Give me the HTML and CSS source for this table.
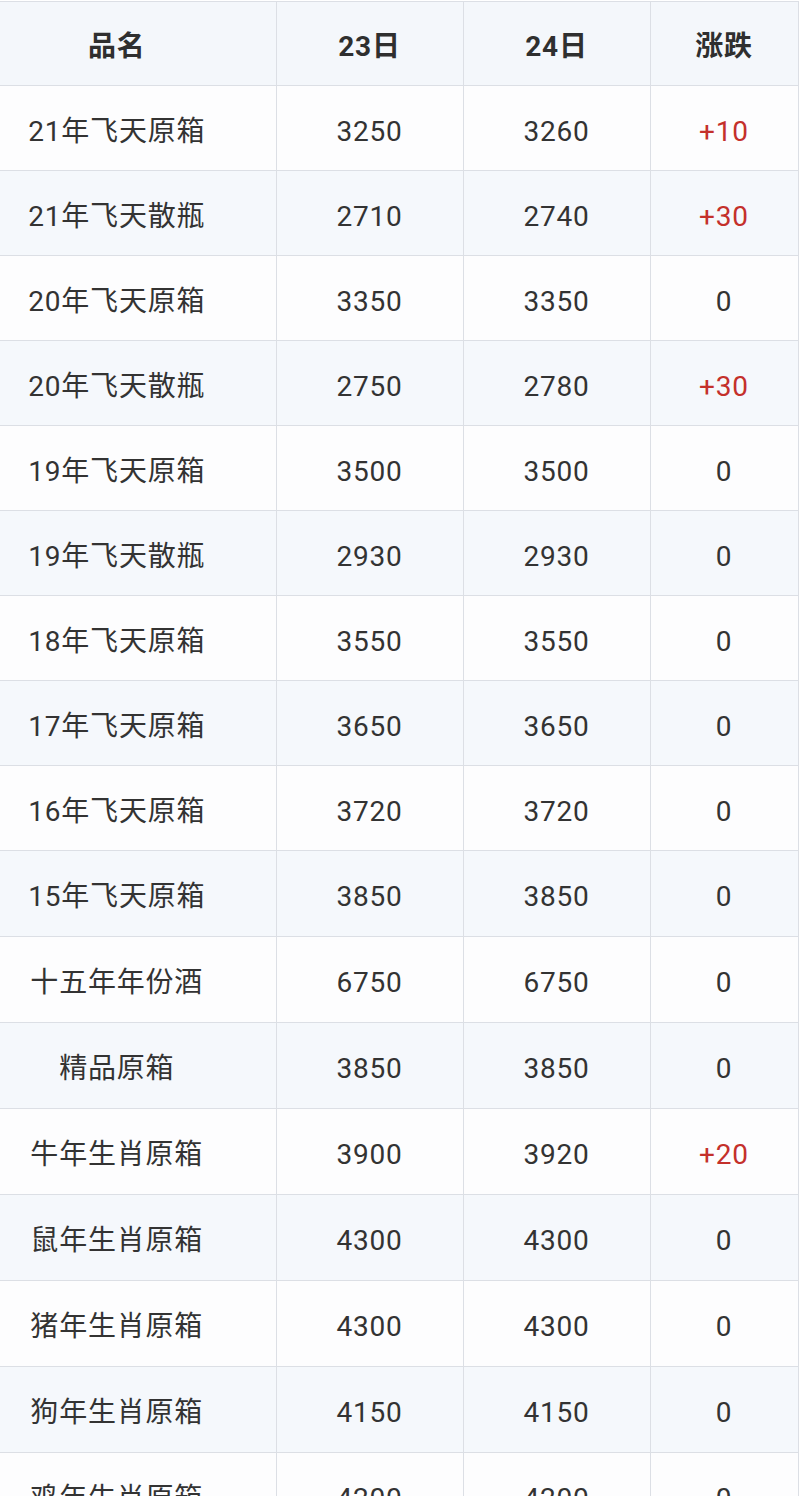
FILE: index.html
```html
<!DOCTYPE html>
<html lang="zh-CN">
<head>
<meta charset="utf-8">
<title>价格表</title>
<link rel="stylesheet" href="styles.css">
</head>
<body>
<table class="price">
  <colgroup>
    <col class="c-name"><col class="c-num"><col class="c-num"><col class="c-diff">
  </colgroup>
  <thead>
    <tr class="head"><th class="name">品名</th><th>23日</th><th>24日</th><th>涨跌</th></tr>
  </thead>
  <tbody>
    <tr><td class="name">21年飞天原箱</td><td>3250</td><td>3260</td><td class="up">+10</td></tr>
    <tr class="alt"><td class="name">21年飞天散瓶</td><td>2710</td><td>2740</td><td class="up">+30</td></tr>
    <tr><td class="name">20年飞天原箱</td><td>3350</td><td>3350</td><td>0</td></tr>
    <tr class="alt"><td class="name">20年飞天散瓶</td><td>2750</td><td>2780</td><td class="up">+30</td></tr>
    <tr><td class="name">19年飞天原箱</td><td>3500</td><td>3500</td><td>0</td></tr>
    <tr class="alt"><td class="name">19年飞天散瓶</td><td>2930</td><td>2930</td><td>0</td></tr>
    <tr><td class="name">18年飞天原箱</td><td>3550</td><td>3550</td><td>0</td></tr>
    <tr class="alt"><td class="name">17年飞天原箱</td><td>3650</td><td>3650</td><td>0</td></tr>
    <tr><td class="name">16年飞天原箱</td><td>3720</td><td>3720</td><td>0</td></tr>
    <tr class="alt tall"><td class="name">15年飞天原箱</td><td>3850</td><td>3850</td><td>0</td></tr>
    <tr class="tall"><td class="name">十五年年份酒</td><td>6750</td><td>6750</td><td>0</td></tr>
    <tr class="alt tall"><td class="name">精品原箱</td><td>3850</td><td>3850</td><td>0</td></tr>
    <tr class="tall"><td class="name">牛年生肖原箱</td><td>3900</td><td>3920</td><td class="up">+20</td></tr>
    <tr class="alt tall"><td class="name">鼠年生肖原箱</td><td>4300</td><td>4300</td><td>0</td></tr>
    <tr class="tall"><td class="name">猪年生肖原箱</td><td>4300</td><td>4300</td><td>0</td></tr>
    <tr class="alt tall"><td class="name">狗年生肖原箱</td><td>4150</td><td>4150</td><td>0</td></tr>
    <tr class="tall"><td class="name">鸡年生肖原箱</td><td>4200</td><td>4200</td><td>0</td></tr>
  </tbody>
</table>
</body>
</html>
```

FILE: styles.css
```css
html, body {
  margin: 0;
  padding: 0;
  background: #ffffff;
}

body {
  font-family: Roboto, "Noto Sans CJK SC", sans-serif;
  color: #333333;
  overflow: hidden;
}

.price {
  border-collapse: collapse;
  table-layout: fixed;
  width: 798px;
  margin-top: 1px;
  font-size: 28px;
  letter-spacing: 0.8px;
}

.c-name { width: 276px; }
.c-num { width: 187px; }
.c-diff { width: 148px; }

.price th,
.price td {
  border: 1px solid #dcdfe5;
  text-align: center;
  vertical-align: middle;
  padding: 7px 0 0 0;
  font-weight: 400;
  line-height: 1;
}

.price tr > :first-child {
  border-left: none;
}

.price .name {
  padding-right: 42px;
}

.price tr {
  height: 85px;
  background: #fdfdfe;
}

.price tr.tall {
  height: 86px;
}

.price tr.alt {
  background: #f5f8fc;
}

.price tr.head {
  height: 84px;
  background: #f4f7fb;
}

.price th {
  font-weight: 700;
  color: #2f2f2f;
  padding-top: 7px;
}

.price .up {
  color: #c4302b;
}
```
